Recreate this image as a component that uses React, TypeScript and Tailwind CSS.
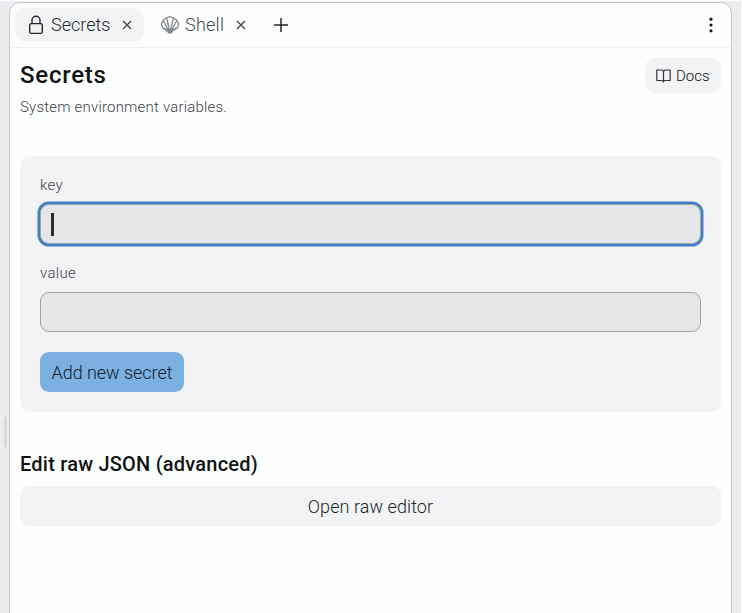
import React from 'react';

function LockIcon() {
  return (
    <svg width="16" height="20" viewBox="0 0 16 20" fill="none" stroke="#24272c" strokeWidth="1.4" className="shrink-0">
      <rect x="1.7" y="8.6" width="12.6" height="9.8" rx="1.6" />
      <path d="M4 8.6V5.2a4 4 0 0 1 8 0v3.4" />
    </svg>
  );
}

function ShellIcon() {
  return (
    <svg width="20" height="20" viewBox="0 0 20 20" fill="none" stroke="#85888d" strokeWidth="1.3" strokeLinejoin="round" className="shrink-0">
      <path d="M7.5 16 2.4 12.8 1.4 8.6l1.8-3.4 3-2.2L10 1.7 13.8 3l3 2.2 1.8 3.4-1 4.2-5.1 3.2z" />
      <path d="M8.6 15.5 3.4 5.8M9.4 15 6.6 3.2M10.6 15l2.8-11.8M11.4 15.5l5.2-9.7" />
      <path d="M3 12.8 7 14l3 1.5 3-1.5 4-1.2-3.8 3.2-1.5 2.2H8.3L6.8 16z" fill="#85888d" strokeWidth="0.5" />
    </svg>
  );
}

function CloseIcon() {
  return (
    <svg width="10" height="10" viewBox="0 0 10 10" stroke="#42464b" strokeWidth="1.3" className="shrink-0">
      <path d="m1 1 8 8M9 1 1 9" />
    </svg>
  );
}

function Tabs() {
  return (
    <header className="flex h-[45px] shrink-0 items-center border-b border-[#eff0f1] pl-[5px] pr-[17px]">
      <div className="flex h-[34px] w-[129px] items-center rounded-[10px] bg-[#f2f3f5] pl-[13px]">
        <LockIcon />
        <span className="ml-[7px] w-[60px] whitespace-nowrap text-[18px] leading-6 text-[#24272c]">Secrets</span>
        <span className="ml-[11px] flex"><CloseIcon /></span>
      </div>
      <div className="flex h-[34px] items-center pl-[16px]">
        <ShellIcon />
        <span className="ml-[5px] w-[40px] whitespace-nowrap text-[18px] leading-6 tracking-[0.25px] text-[#44474d]">Shell</span>
        <span className="ml-[11px] flex"><CloseIcon /></span>
      </div>
      <svg width="16" height="16" viewBox="0 0 16 16" stroke="#24272c" strokeWidth="1.5" className="ml-[27px]">
        <path d="M8 1v14M1 8h14" />
      </svg>
      <svg width="6" height="16" viewBox="0 0 6 16" fill="#16181b" className="ml-auto">
        <circle cx="3" cy="2.2" r="1.6" /><circle cx="3" cy="8" r="1.6" /><circle cx="3" cy="13.8" r="1.6" />
      </svg>
    </header>
  );
}

export default function App() {
  return (
    <div className="h-[613px] w-[742px] overflow-hidden bg-white pr-px pt-px font-['Roboto','Noto_Sans',sans-serif] font-[350]">
      <div className="flex h-[612px] bg-[#ebecf0] pt-px">
        <div className="w-[9px] shrink-0 pl-[4px] pt-[415px]">
          <div className="h-[30px] w-[3px] bg-[#d8dadd]" />
        </div>
        <main className="flex h-[630px] w-[723px] shrink-0 flex-col rounded-[11px] border border-[#c5c7c9] bg-[#fdfefe]">
          <Tabs />
          <div className="flex flex-col px-[10px]">
            <div className="flex h-[71px] justify-between pt-[10px]">
              <div>
                <h1 className="mt-[1px] whitespace-nowrap text-[24px] font-[480] leading-[32px] tracking-[0.75px] text-[#101214]">Secrets</h1>
                <p className="mt-[6px] whitespace-nowrap text-[15px] leading-5 tracking-[0.2px] text-[#3f4248]">System environment variables.</p>
              </div>
              <button className="flex h-[35px] w-[76px] items-center rounded-[10px] bg-[#f2f3f5] pl-[11px] text-[15px] text-[#101214]">
                <svg width="15" height="14" viewBox="0 0 15 14" fill="none" stroke="#303338" strokeWidth="1.2" strokeLinejoin="round">
                  <path d="M7.5 3.2C7.5 1.8 6.6 1 5.2 1H.8v10.5h4.7c1.1 0 2 .6 2 1.5V3.2ZM7.5 3.2c0-1.4.9-2.2 2.3-2.2h4.4v10.5H9.5c-1.1 0-2 .6-2 1.5" />
                </svg>
                <span className="ml-[5px] pt-px">Docs</span>
              </button>
            </div>
            <section className="mt-[37px] flex h-[256px] flex-col items-start rounded-[10px] bg-[#f2f3f5] px-5 pt-[19px]">
              <label className="text-[15px] leading-5 tracking-[0.3px] text-[#3f4248]">key</label>
              <div className="mt-[9px] flex h-10 w-full items-center rounded-[9px] border border-[#a2a4a5] bg-[#e5e6e8] pl-[10px] ring-[2.5px] ring-[#437fc5]">
                <span className="h-[23px] w-[2.5px] bg-[#2a2c2e]" />
              </div>
              <label className="mt-[19px] text-[15px] leading-5 tracking-[0.3px] text-[#3f4248]">value</label>
              <div className="mt-[9px] h-10 w-full rounded-[9px] border border-[#a2a4a7] bg-[#e5e6e8]" />
              <button className="mt-5 h-10 w-[144px] whitespace-nowrap rounded-[9px] bg-[#7bb0e0] text-[18px] tracking-[-0.05px] text-[#102030]">Add new secret</button>
            </section>
            <h2 className="mt-[40px] whitespace-nowrap text-[20px] font-[480] leading-6 tracking-[0.22px] text-[#101214]">Edit raw JSON (advanced)</h2>
            <button className="mt-[10px] h-10 rounded-[9px] bg-[#f2f3f5] text-[18px] tracking-[0.07px] text-[#1c1f24]">Open raw editor</button>
          </div>
        </main>
      </div>
    </div>
  );
}
